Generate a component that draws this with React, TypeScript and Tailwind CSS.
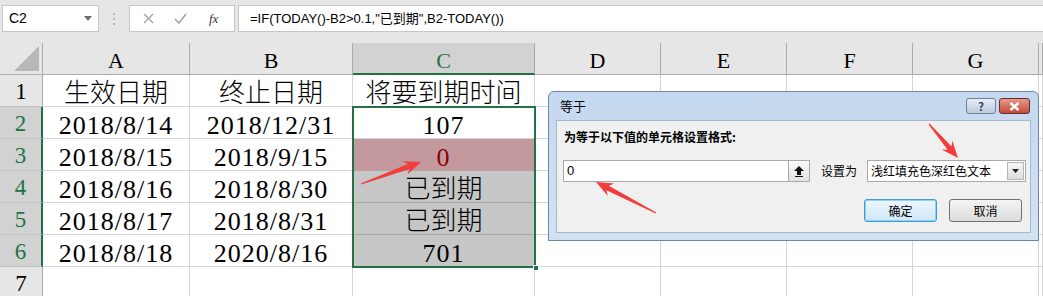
import React from "react";

const cols = ["A", "B", "C", "D", "E", "F", "G", "H"];

const rows: string[][] = [
  ["生效日期", "终止日期", "将要到期时间"],
  ["2018/8/14", "2018/12/31", "107"],
  ["2018/8/15", "2018/9/15", "0"],
  ["2018/8/16", "2018/8/30", "已到期"],
  ["2018/8/17", "2018/8/31", "已到期"],
  ["2018/8/18", "2020/8/16", "701"],
  ["", "", ""],
];

const cellFont = { fontFamily: '"Liberation Serif", "Noto Sans CJK SC", serif' };

// tapered annotation arrow, computed from tail & tip
function arrowPoints(x1: number, y1: number, x2: number, y2: number) {
  const dx = x2 - x1;
  const dy = y2 - y1;
  const len = Math.hypot(dx, dy);
  const ux = dx / len;
  const uy = dy / len;
  const nx = -uy;
  const ny = ux;
  const at = (d: number, w: number) => `${x1 + ux * d + nx * w},${y1 + uy * d + ny * w}`;
  return [
    at(0, 0.6),
    at(len - 13, 2.6),
    at(len - 17, 7),
    at(len, 0),
    at(len - 17, -7),
    at(len - 13, -2.6),
    at(0, -0.6),
  ].join(" ");
}

function Arrows() {
  return (
    <svg className="absolute inset-0 pointer-events-none" width={1043} height={296}>
      <polygon points={arrowPoints(361, 184, 421, 162)} fill="#f33d3d" />
      <polygon points={arrowPoints(656, 213, 596, 182)} fill="#f33d3d" />
      <polygon points={arrowPoints(929, 124, 958, 158)} fill="#f33d3d" />
    </svg>
  );
}

function FormulaBar() {
  return (
    <div className="h-[43px] bg-[#e6e6e6] flex items-start pt-[5px] pl-[2px] gap-0">
      <div className="w-[97px] h-[27px] bg-white border border-[#c6c6c6] flex items-center justify-between pl-[6px] pr-[6px]">
        <span className="text-[14px] text-black" style={{ fontFamily: '"Liberation Sans", sans-serif' }}>C2</span>
        <svg width="8" height="5" viewBox="0 0 8 5"><path d="M0 0h8L4 5z" fill="#6e6e6e" /></svg>
      </div>
      <div className="w-[30px] h-[27px] flex flex-col items-center justify-center gap-[3px]">
        <span className="w-[2px] h-[2px] bg-[#b4b4b4]" />
        <span className="w-[2px] h-[2px] bg-[#b4b4b4]" />
        <span className="w-[2px] h-[2px] bg-[#b4b4b4]" />
      </div>
      <div className="w-[106px] h-[27px] bg-white border border-[#c6c6c6] flex items-center">
        <svg className="ml-[13px]" width="11" height="11" viewBox="0 0 11 11">
          <path d="M1 1l9 9M10 1l-9 9" stroke="#a0a0a0" strokeWidth="1.3" />
        </svg>
        <svg className="ml-[20px]" width="13" height="11" viewBox="0 0 13 11">
          <path d="M1 6l4 4 7-9" stroke="#a0a0a0" strokeWidth="1.5" fill="none" />
        </svg>
        <span className="ml-[22px] text-[13px] italic text-[#333]" style={{ fontFamily: '"Liberation Serif", serif' }}>fx</span>
      </div>
      <div className="ml-[3px] flex-1 h-[27px] bg-white border border-[#c6c6c6] border-r-0 flex items-center pl-[11px]">
        <span className="text-[13px] text-black" style={{ fontFamily: '"Liberation Sans", "Noto Sans CJK SC", sans-serif' }}>
          =IF(TODAY()-B2&gt;0.1,"已到期",B2-TODAY())
        </span>
      </div>
    </div>
  );
}

function Dialog() {
  const ui = { fontFamily: '"Noto Sans CJK SC", "Liberation Sans", sans-serif' };
  return (
    <div
      className="absolute left-[548px] top-[91px] w-[491px] h-[150px] rounded-t-[6px] border border-[#6f87a6] bg-gradient-to-b from-[#c4d8ef] to-[#d3e2f3] px-[7px] pb-[7px] flex flex-col"
      style={ui}
    >
      <div className="h-[28px] flex items-center justify-between">
        <span className="pl-[4px] text-[13px] text-black">等于</span>
        <div className="flex gap-[3px] pr-[1px]">
          <div className="w-[30px] h-[16px] rounded-[3px] border border-[#6f7f98] bg-gradient-to-b from-[#e8eef7] to-[#b9c9df] flex items-center justify-center text-[11px] font-bold text-[#2c3d57] leading-none">?</div>
          <div className="w-[31px] h-[16px] rounded-[3px] border border-[#6b2a2a] bg-gradient-to-b from-[#e69a8a] to-[#c24a3c] flex items-center justify-center">
            <svg width="11" height="9" viewBox="0 0 11 9"><path d="M1.5 1l8 7M9.5 1l-8 7" stroke="white" strokeWidth="2.4" /></svg>
          </div>
        </div>
      </div>
      <div className="flex-1 bg-[#f0f0f0] border border-[#a5b9d1] pl-[6px] pr-[6px] pt-[8px]">
        <div className="text-[12px] font-bold text-black leading-[16px] pl-[1px] whitespace-nowrap">为等于以下值的单元格设置格式:</div>
        <div className="mt-[15px] flex items-center whitespace-nowrap">
          <div className="shrink-0 w-[247px] h-[22px] bg-white border border-[#a9a9a9] flex items-center justify-between pl-[3px]">
            <span className="text-[13px] text-black" style={{ fontFamily: '"Liberation Sans", sans-serif' }}>0</span>
            <div className="w-[21px] h-[20px] border-l border-[#a9a9a9] bg-gradient-to-b from-[#fbfbfb] to-[#e2e2e2] flex items-center justify-center">
              <svg width="10" height="11" viewBox="0 0 10 11"><path d="M5 0L0 5h3v4h4V5h3zM1 10h8v1H1z" fill="#111" /></svg>
            </div>
          </div>
          <span className="shrink-0 ml-[11px] text-[12px] text-black">设置为</span>
          <div className="shrink-0 ml-[10px] w-[159px] h-[22px] bg-white border border-[#a9a9a9] flex items-center justify-between pl-[3px] pr-[1px]">
            <span className="text-[12px] text-black">浅红填充色深红色文本</span>
            <div className="w-[17px] h-[18px] border border-[#b5b5b5] bg-gradient-to-b from-[#f6f6f6] to-[#dcdcdc] flex items-center justify-center">
              <svg width="7" height="4" viewBox="0 0 7 4"><path d="M0 0h7L3.5 4z" fill="#222" /></svg>
            </div>
          </div>
        </div>
        <div className="mt-[17px] flex justify-end gap-[12px] pr-[2px]">
          <div className="w-[73px] h-[23px] rounded-[3px] border border-[#3c9bd6] bg-gradient-to-b from-[#eef7fd] to-[#cfe6f7] shadow-[inset_0_0_0_1px_#8fd0f5] flex items-center justify-center text-[12px] text-black">确定</div>
          <div className="w-[73px] h-[23px] rounded-[3px] border border-[#707070] bg-gradient-to-b from-[#f4f4f4] to-[#dcdcdc] flex items-center justify-center text-[12px] text-black">取消</div>
        </div>
      </div>
    </div>
  );
}

const hasCjk = (s: string) => /[\u4e00-\u9fff]/.test(s);

export default function App() {
  return (
    <div className="relative w-[1043px] h-[296px] overflow-hidden bg-white">
      <FormulaBar />
      <div className="grid grid-cols-[43px_147px_163px_182px_126px_126px_126px_126px_1fr] auto-rows-[32px]">
        {/* header row */}
        <div className="bg-[#e6e6e6] border-r border-b border-[#ababab] relative flex items-end justify-end pr-[3px] pb-[3px]">
          <svg width="25" height="25" viewBox="0 0 25 25"><path d="M25 0V25H0z" fill="#b8b8b8" /></svg>
        </div>
        {cols.map((c) => {
          const sel = c === "C";
          return (
            <div
              key={c}
              className={`flex items-center justify-center pt-[4px] text-[22px] border-r border-[#ababab] ${
                sel ? "bg-[#d2d2d2] text-[#217346] border-b-2 border-b-[#217346]" : "bg-[#e6e6e6] text-black border-b border-b-[#ababab]"
              }`}
              style={cellFont}
            >
              {c === "H" ? "" : c}
            </div>
          );
        })}

        {rows.map((r, i) => {
          const n = i + 1;
          const selRow = n >= 2 && n <= 6;
          return (
            <React.Fragment key={n}>
              <div
                className={`flex items-center justify-center pt-[3px] text-[23px] border-b border-[#c2c2c2] ${
                  selRow ? "bg-[#d2d2d2] text-[#217346] border-r-2 border-r-[#217346]" : "bg-[#e6e6e6] text-black border-r border-r-[#ababab]"
                }`}
                style={cellFont}
              >
                {n}
              </div>
              {cols.map((c, j) => {
                const v = r[j] ?? "";
                let bg = "bg-white";
                let fg = "text-black";
                let line = "border-[#d4d4d4]";
                if (c === "C" && n === 3) {
                  bg = "bg-[#c4999e]";
                  fg = "text-[#8a0006]";
                  line = "border-[#b5a0a3]";
                } else if (c === "C" && n >= 4 && n <= 6) {
                  bg = "bg-[#c6c6c6]";
                  line = "border-[#a9a9a9]";
                }
                return (
                  <div
                    key={c}
                    className={`flex items-center justify-center pt-[6px] text-[26px] leading-none whitespace-nowrap border-r border-b ${
                      hasCjk(v) ? "font-light tracking-[0px]" : "tracking-[1px]"
                    } ${bg} ${fg} ${line}`}
                    style={cellFont}
                  >
                    {v}
                  </div>
                );
              })}
            </React.Fragment>
          );
        })}
      </div>

      {/* selection range C2:C6 */}
      <div className="absolute left-[352px] top-[106px] w-[184px] h-[162px] border-2 border-[#217346] pointer-events-none" />
      <div className="absolute left-[533px] top-[265px] w-[6px] h-[6px] bg-[#217346] border border-white" />

      <Dialog />
      <Arrows />
    </div>
  );
}
